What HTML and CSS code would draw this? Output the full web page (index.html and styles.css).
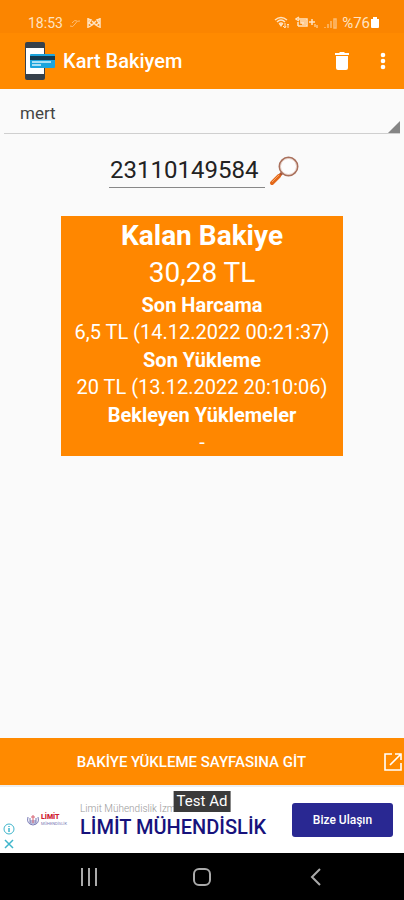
FILE: index.html
```html
<!DOCTYPE html>
<html lang="tr">
<head>
<meta charset="utf-8">
<meta name="viewport" content="width=device-width, initial-scale=1">
<title>Kart Bakiyem</title>
<link rel="stylesheet" href="styles.css">
</head>
<body>
<div class="screen">
  <div class="status">
    <time>18:53</time>
    <svg class="faint" width="14" height="12" viewBox="0 0 14 12" aria-hidden="true"><path d="M2 9q3 2 5-2t5-3M4 6q3-4 5-2" fill="none" stroke="currentColor"/></svg>
    <svg width="14" height="12" viewBox="0 0 14 12" aria-hidden="true"><path d="M1 1v10M1 2l3 1-2 3 3 2-3 2M13 1v10M13 2l-3 1 2 3-3 2 3 2M5 4l4 4M9 4L5 8" fill="none" stroke="currentColor" stroke-width="1.5"/></svg>
    <span class="grow"></span>
    <svg width="16" height="14" viewBox="0 0 16 14" aria-hidden="true"><path d="M1 4q6-5 12 0M3 6q4-4 8 0M5 8q2-2 4 0" fill="none" stroke="currentColor" stroke-width="1.5"/><path d="M5 8h4l-2 3z" fill="currentColor"/><path d="M11 7v4M9 10l2 2 1-2M14 12V8M13 9l1-1 1 1" fill="none" stroke="currentColor"/></svg>
    <svg width="24" height="14" viewBox="0 0 24 14" aria-hidden="true"><path d="M3 3h9v7H3M4 1L1 3l3 2M3 6v4M6 4v3h3M8 4v5M10 4v5M14 6h6M17 3v6" fill="none" stroke="currentColor" stroke-width="1.5"/><path d="M20 8v3M22 9v3" stroke="currentColor"/></svg>
    <svg class="faint" width="13" height="12" viewBox="0 0 13 12" aria-hidden="true"><path d="M1 10v1M4 7v4M7 4v7M10 11V2h2v9z" fill="none" stroke="currentColor" stroke-width="1.5"/></svg>
    <span class="battery-text">%76</span>
    <svg class="battery" width="10" height="13" viewBox="0 0 10 13" aria-hidden="true"><path d="M3 1h4v2h2v8q0 1-1 1H2q-1 0-1-1V3h2z" fill="#fff"/></svg>
  </div>
  <header class="appbar">
    <svg class="logo" width="32" height="40" viewBox="0 0 32 40" aria-hidden="true"><rect x="1" y="1" width="20" height="38" rx="2" fill="#37414b"/><path d="M2 7h18v26H2z" fill="#fff"/><rect x="6" y="13" width="25" height="14" rx="1" fill="#1da4dc"/><path d="M6 15h25v4H6z" fill="#153a50"/><path d="M8 21h19M8 24h9" stroke="#d9f2fb" stroke-width="1.5"/></svg>
    <h1>Kart Bakiyem</h1>
    <button class="icon-btn trash" aria-label="Sil"><svg width="16" height="20" viewBox="0 0 16 20"><path d="M1 2h4l1-1h4l1 1h4v2H1zM2 5h12v12q0 2-2 2H4q-2 0-2-2z" fill="#fff"/></svg></button>
    <button class="icon-btn more" aria-label="Menü"><svg width="6" height="18" viewBox="0 0 6 18"><g fill="#fff"><circle cx="3" cy="3" r="2.300"/><circle cx="3" cy="9" r="2.300"/><circle cx="3" cy="15" r="2.300"/></g></svg></button>
  </header>
  <main>
    <div class="spinner">
      <select aria-label="Kart"><option>mert</option></select>
      <svg class="corner" width="12" height="12" viewBox="0 0 12 12" aria-hidden="true"><path d="M12 0v12H0z" fill="#858585"/></svg>
    </div>
    <form class="search">
      <input type="text" aria-label="Kart numarası" value="23110149584">
      <button type="button" class="icon-btn" aria-label="Sorgula"><svg width="32" height="32" viewBox="0 0 32 32"><path d="M14 18l-3 3" stroke="#a9502f" stroke-width="3"/><path d="M11 21l-7 7" stroke="#e3681a" stroke-width="4" stroke-linecap="round"/><path d="M11 20l-7 7" stroke="#f7a463"/><circle cx="20.500" cy="11.500" r="9" fill="#fdfdfd" stroke="#a9705c" stroke-width="2"/><circle cx="20.500" cy="11.500" r="8" fill="none" stroke="#e8d3ca"/></svg></button>
    </form>
    <section class="balance">
      <h2>Kalan Bakiye</h2>
      <p class="amount">30,28 TL</p>
      <h3>Son Harcama</h3>
      <p>6,5 TL (14.12.2022 00:21:37)</p>
      <h3>Son Yükleme</h3>
      <p>20 TL (13.12.2022 20:10:06)</p>
      <h3>Bekleyen Yüklemeler</h3>
      <p>-</p>
    </section>
  </main>
  <button class="load"><span>BAKİYE YÜKLEME SAYFASINA GİT</span><svg width="20" height="20" viewBox="0 0 20 20" aria-hidden="true"><path d="M9 2H2v16h16v-7M12 2h6v6M18 2L7 13" fill="none" stroke="#fff" stroke-width="1.600"/></svg></button>
  <aside class="ad">
    <div class="ad-marks">
      <svg width="12" height="12" viewBox="0 0 12 12" aria-hidden="true"><circle cx="6" cy="6" r="5" fill="none" stroke="#3fb5cb"/><path d="M6 5v4M6 3v1" stroke="#3fb5cb" stroke-width="1.500"/></svg>
      <svg width="12" height="12" viewBox="0 0 12 12" aria-hidden="true"><path d="M2 2l8 8M10 2l-8 8" stroke="#3fb5cb" stroke-width="1.500"/></svg>
    </div>
    <div class="brand">
      <svg width="14" height="12" viewBox="0 0 14 12" aria-hidden="true"><path d="M2 3q-2 7 5 8 7-1 5-8M4 4v5h6V4M4 7h6" fill="none" stroke="#7779b5"/><path d="M7 1v8M5 3h4" stroke="#d66070"/></svg>
      <div><b>LİMİT</b><small>MÜHENDİSLİK</small></div>
    </div>
    <div class="ad-copy"><span>Limit Mühendislik İzmir</span><strong>LİMİT MÜHENDİSLİK</strong></div>
    <a class="cta" href="#">Bize Ulaşın</a>
    <span class="test">Test Ad</span>
  </aside>
  <nav class="nav">
    <button class="icon-btn" aria-label="Son uygulamalar"><svg width="20" height="20" viewBox="0 0 20 20"><path d="M4 1v18M11 1v18M18 1v18" stroke="#aaa" stroke-width="2"/></svg></button>
    <button class="icon-btn" aria-label="Ana ekran"><svg width="20" height="20" viewBox="0 0 20 20"><rect x="2" y="2" width="16" height="16" rx="5" fill="none" stroke="#aaa" stroke-width="2"/></svg></button>
    <button class="icon-btn" aria-label="Geri"><svg width="20" height="20" viewBox="0 0 20 20"><path d="M14 2L6 10l8 8" fill="none" stroke="#aaa" stroke-width="2"/></svg></button>
  </nav>
</div>
</body>
</html>
```
FILE: styles.css
```css
* { box-sizing: border-box; }
body { margin: 0; font-family: Roboto, sans-serif; background: #fafafa; }
h1, h2, h3, p { margin: 0; }
button { border: 0; font: inherit; cursor: pointer; }
svg { display: block; flex: none; }
.screen { min-height: 100vh; display: flex; flex-direction: column; }
.icon-btn { background: none; padding: 0; display: flex; align-items: center; justify-content: center; }

.status { display: flex; align-items: center; gap: 5px; padding: 12px 24px 0 28px; height: 33px; background: #fb8500; color: #ffe3c2; font-size: 14px; line-height: 18px; }
.grow { flex: 1; }
.faint { opacity: .6; }
.battery-text { font-size: 15px; }
.battery { margin-left: -5px; }

.appbar { display: flex; align-items: center; height: 56px; padding: 0 17px 0 24px; background: #ff8a00; color: #fff; }
.appbar h1 { flex: 1; margin-left: 7px; font-size: 20px; line-height: 24px; font-weight: 500; }
.trash { margin-right: 29px; }
.more { width: 8px; }

main { flex: 1; }
.spinner { position: relative; margin: 0 4px; height: 45px; border-bottom: 1px solid #cfcfcf; }
.spinner select { appearance: none; width: 100%; height: 44px; padding: 4px 16px 0; border: 0; background: none; color: #444; font: 17px/24px Roboto, sans-serif; }
.corner { position: absolute; right: 0; bottom: 0; }

.search { display: flex; justify-content: center; align-items: center; gap: 3px; margin-top: 20px; padding-left: 5px; height: 34px; }
.search input { width: 156px; height: 34px; padding: 0 0 2px 1px; border: 0; border-bottom: 1px solid #888; background: none; color: #222; font: 24px/30px Roboto, sans-serif; }

.balance { width: 70%; margin: 28px auto 0; padding-top: 1px; background: #ff8700; color: #fff; text-align: center; white-space: nowrap; }
.balance h2, .balance .amount { font-size: 28px; line-height: 37px; }
.balance h2 { font-weight: 700; }
.balance h3, .balance p { font-size: 20px; }
.balance h3 { font-weight: 700; line-height: 28px; }
.balance p { line-height: 27px; }

.load { display: flex; align-items: center; height: 47px; padding: 0 1px 0 0; background: #ff8a00; color: #fff; font-size: 15px; font-weight: 500; }
.load span { flex: 1; }

.ad { position: relative; display: flex; align-items: center; height: 68px; padding-right: 11px; background: #fff; border-top: 2px solid #eee; }
.ad-marks { align-self: flex-end; padding: 0 0 3px 3px; display: grid; gap: 3px; }
.brand { display: flex; gap: 1px; margin-left: 11px; width: 54px; }
.brand div { display: grid; align-content: start; }
.brand b { color: #cf2030; font-size: 7px; line-height: 7px; font-weight: 900; }
.brand small { color: #7779b5; font-size: 4px; line-height: 5px; }
.ad-copy { flex: 1; display: grid; white-space: nowrap; }
.ad-copy span { color: #999; font-size: 10px; line-height: 14px; font-weight: 300; }
.ad-copy strong { color: #17127c; font-size: 20px; line-height: 22px; font-weight: 500; }
.cta { display: grid; place-items: center; width: 101px; height: 34px; border-radius: 3px; background: #292892; color: #fff; font-size: 12px; font-weight: 500; text-decoration: none; }
.test { position: absolute; top: 4px; left: 50%; transform: translateX(-50%); padding: 0 3px; background: #3b3b3b; color: #fff; font-size: 15px; line-height: 21px; white-space: nowrap; }

.nav { display: flex; justify-content: center; gap: 94px; height: 47px; background: #000; }
```
